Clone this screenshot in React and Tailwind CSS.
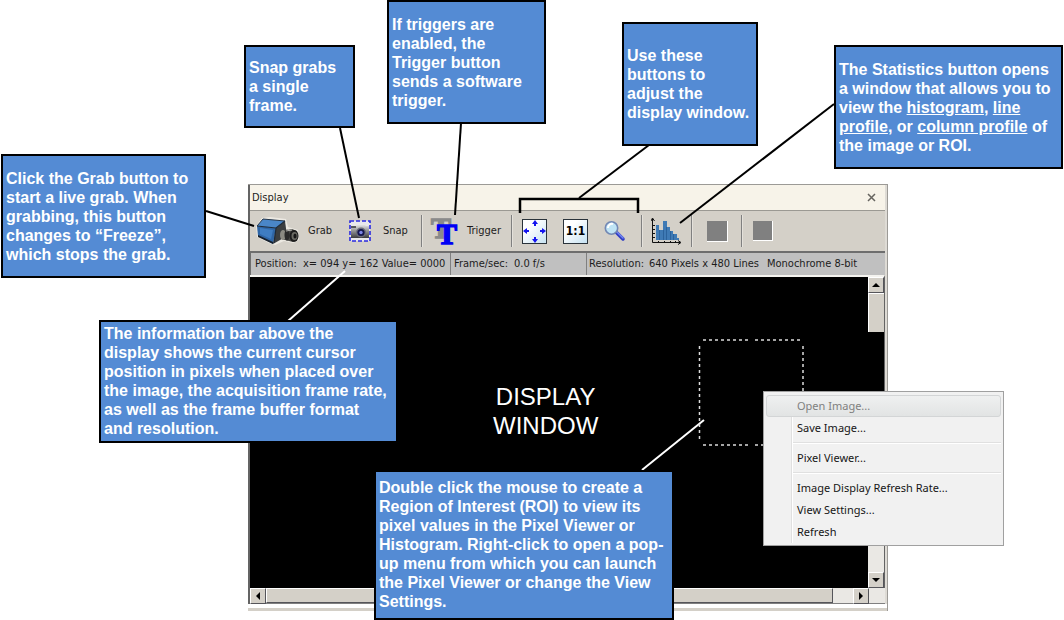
import React from "react";

const UI = "font-['DejaVu_Sans_Condensed','DejaVu_Sans',sans-serif] text-[11px] leading-[14px] text-[#1c1c1c]";

function Callout({ className, children }) {
  return (
    <aside
      className={`absolute flex items-center border-2 border-black bg-[#548bd4] pl-[3px] font-['Liberation_Sans',Arial,sans-serif] text-base leading-[19px] font-bold text-white ${className}`}
    >
      <p>{children}</p>
    </aside>
  );
}

function Lines({ rows }) {
  return rows.map((row, i) => (
    <span key={i} className="block whitespace-nowrap">
      {row}
    </span>
  ));
}

function Divider() {
  return <div className="h-8 w-[2px] shrink-0 border-l border-[#808080] bg-[#e4e1db]" />;
}

function CameraIcon() {
  return (
    <svg width="44" height="30" viewBox="0 0 44 30" className="shrink-0" aria-hidden="true">
      <path d="M0 10 L6 2 L14 1 L30 3 L32 11 L42 14 L43 24 L37 27 L28 25 L19 29 L13 27 L1 21Z" fill="#ece9e2" />
      <path d="M1 10 L7 3 L29 5 L20 12Z" fill="#4a86c8" />
      <path d="M1 10 L20 12 L17 28 L2 20Z" fill="#2f66a6" />
      <path d="M4 12 L17 14 L15 23 L4 18Z" fill="#3f7dc2" />
      <path d="M20 12 L29 5 L31 20 L17 28Z" fill="#3b3e40" />
      <path d="M1 10 L20 12 L29 5 M20 12 L18 27" fill="none" stroke="#1d2a3a" strokeWidth="1.2" />
      <path d="M1 10 L7 3 L29 5" fill="none" stroke="#26374b" strokeWidth="1" />
      <path d="M2 19 L17 26 L17 28 L2 21Z" fill="#17202c" />
      <path d="M26 15 L36 13 L41 15 L42 22 L37 26 L25 23Z" fill="#4a4a47" />
      <ellipse cx="27" cy="19" rx="3" ry="5" fill="#8b8a82" />
      <ellipse cx="31" cy="19" rx="2.500" ry="5.500" fill="#2a2a2a" />
      <ellipse cx="38" cy="20" rx="4.500" ry="6" fill="#1d1d1d" />
      <ellipse cx="38.500" cy="20" rx="3" ry="4" fill="#6b6b64" />
      <ellipse cx="39" cy="20" rx="1.600" ry="2.500" fill="#161616" />
      <path d="M30 15 L36 14" stroke="#b5b5b0" strokeWidth="1" />
    </svg>
  );
}

function SnapIcon() {
  return (
    <svg width="22" height="22" viewBox="0 0 22 22" className="shrink-0" aria-hidden="true">
      <defs>
        <linearGradient id="body" x1="0" y1="0" x2="0" y2="1">
          <stop offset="0" stopColor="#f1f1f1" />
          <stop offset="0.400" stopColor="#a3a3a5" />
          <stop offset="1" stopColor="#3b3b3d" />
        </linearGradient>
      </defs>
      <rect x="1" y="1" width="20" height="20" fill="#e9e8ec" />
      <path d="M2 6 H7 L9 4 H15 L17 6 H20 V18 H2Z" fill="url(#body)" />
      <path d="M2 6 H7 V8 H2Z" fill="#56585c" />
      <circle cx="12" cy="12.500" r="5" fill="#6b6c78" />
      <circle cx="12" cy="12.500" r="3.600" fill="#15164d" />
      <circle cx="12" cy="12.500" r="1.700" fill="#7d86e8" />
      <rect x="1" y="1" width="20" height="20" fill="none" stroke="#2a2ae0" strokeWidth="1.600" strokeDasharray="4 2" />
    </svg>
  );
}

function TriggerIcon() {
  return (
    <svg width="29" height="28" viewBox="0 0 29 28" className="shrink-0 overflow-visible font-['Liberation_Serif',serif] font-bold" aria-hidden="true">
      <text x="1" y="21" fontSize="30" fill="#8a8a8a" stroke="#8a8a8a" strokeWidth="1.500">T</text>
      <text x="7" y="27" fontSize="30" fill="#0000f5" stroke="#0000f5" strokeWidth="1.500">T</text>
    </svg>
  );
}

function FitIcon() {
  return (
    <svg width="25" height="25" viewBox="0 0 25 25" aria-hidden="true">
      <defs>
        <linearGradient id="tile" x1="0" y1="0" x2="1" y2="1">
          <stop offset="0.300" stopColor="#ffffff" />
          <stop offset="1" stopColor="#c5e2f2" />
        </linearGradient>
      </defs>
      <rect x="0.500" y="0.500" width="24" height="24" fill="url(#tile)" stroke="#2a333b" />
      <g fill="#1414ef">
        <path d="M13 1 L16 5 H14 V7 H12 V5 H10Z" />
        <path d="M13 24 L16 20 H14 V18 H12 V20 H10Z" />
        <path d="M1 12 L5 9 V11 H7 V13 H5 V15Z" />
        <path d="M24 12 L20 9 V11 H18 V13 H20 V15Z" />
      </g>
    </svg>
  );
}

function ZoomIcon() {
  return (
    <svg width="22" height="22" viewBox="0 0 22 22" aria-hidden="true">
      <path d="M12 12 L19 19" stroke="#2f3cc4" strokeWidth="3.500" strokeLinecap="round" />
      <path d="M13 12 L19 18" stroke="#7387f0" strokeWidth="1.500" strokeLinecap="round" />
      <circle cx="7.500" cy="8" r="6.200" fill="#bfe4f5" stroke="#7388b4" strokeWidth="1.600" />
      <path d="M4 8 A4 4 0 0 1 9 4" stroke="#fff" strokeWidth="2" fill="none" />
    </svg>
  );
}

function StatsIcon() {
  return (
    <svg width="32" height="28" viewBox="0 0 32 28" aria-hidden="true">
      <path d="M5 23 V8 H8 V13 H12 V4 H16 V10 H19 V14 H22 V17 H26 V21 H28 V23Z" fill="#3f7ab5" />
      <path d="M8.500 13 V23 M12.500 13 V23 M15.500 10 V23 M19.500 14 V23 M22.500 17 V23" stroke="#2b629c" strokeWidth="1" />
      <path d="M1.500 2 V25.500 H29" stroke="#111" strokeWidth="1" fill="none" />
      <path d="M0 4 L1.500 1 L3.500 4 M27 23.500 L30 25.500 L27 27.500" stroke="#111" strokeWidth="1" fill="none" />
      <path d="M2 8.500 H4 M2 12.500 H4 M2 16.500 H4 M2 20.500 H4 M7.500 24 V25 M13.500 24 V25 M19.500 24 V25 M24.500 24 V25" stroke="#111" />
    </svg>
  );
}

function ScrollButton({ label, points }) {
  return (
    <button
      aria-label={label}
      className="flex size-4 shrink-0 items-center justify-center border border-t-white border-r-[#55555a] border-b-[#55555a] border-l-white bg-[#d4d0c8]"
    >
      <svg width="8" height="8" viewBox="0 0 8 8" aria-hidden="true">
        <polygon points={points} fill="#000" />
      </svg>
    </button>
  );
}

function MenuItem({ children, disabled }) {
  return (
    <button
      role="menuitem"
      disabled={disabled}
      className={`block h-[22px] w-full rounded-[3px] border pl-[30px] text-left ${
        disabled
          ? "border-[#d3d5d6] bg-linear-to-b from-[#eff0f0] to-[#e2e4e4] text-[#808080]"
          : "border-transparent text-[#161616]"
      }`}
    >
      {children}
    </button>
  );
}

function ContextMenu() {
  return (
    <div
      role="menu"
      className="absolute top-[391px] left-[763px] w-[241px] border border-[#a0a0a0] bg-[#f1f1f1] p-[2px] pt-[3px] font-['Noto_Sans','Open_Sans',sans-serif] text-[11px] leading-5"
    >
      <div className="bg-[linear-gradient(to_right,transparent_25px,#e0e0e0_25px,#e0e0e0_26px,#fff_26px,#fff_27px,transparent_27px)]">
        <MenuItem disabled>Open Image...</MenuItem>
        <MenuItem>Save Image...</MenuItem>
        <hr className="my-[3px] ml-[27px] h-[2px] border-t border-[#e0e0e0] bg-white" />
        <MenuItem>Pixel Viewer...</MenuItem>
        <hr className="my-[3px] ml-[27px] h-[2px] border-t border-[#e0e0e0] bg-white" />
        <MenuItem>Image Display Refresh Rate...</MenuItem>
        <MenuItem>View Settings...</MenuItem>
        <MenuItem>Refresh</MenuItem>
      </div>
    </div>
  );
}

function Toolbar() {
  return (
    <div role="toolbar" aria-label="Display tools" className="flex h-10 items-center bg-[#d4d0c8] pl-[6px]">
      <button className="flex w-[93px] shrink-0 items-center gap-2">
        <CameraIcon />
        Grab
      </button>
      <button className="flex w-[72px] shrink-0 items-center gap-3">
        <SnapIcon />
        Snap
      </button>
      <Divider />
      <button className="ml-[7px] flex w-[81px] shrink-0 items-center gap-2">
        <TriggerIcon />
        Trigger
      </button>
      <Divider />
      <div className="flex w-[128px] shrink-0 items-center gap-4 pl-[9px]">
        <button aria-label="Fit to window">
          <FitIcon />
        </button>
        <button className="flex h-[25px] w-[25px] items-center justify-center border border-[#2a333b] bg-linear-to-br from-white from-30% to-[#c5e2f2] font-['DejaVu_Sans_Condensed',sans-serif] text-[12px] font-bold text-black">
          1:1
        </button>
        <button aria-label="Zoom">
          <ZoomIcon />
        </button>
      </div>
      <Divider />
      <button aria-label="Statistics" className="flex w-12 shrink-0 justify-center">
        <StatsIcon />
      </button>
      <Divider />
      <div className="flex w-12 shrink-0 justify-center">
        <button disabled aria-label="Record" className="size-[21px] border-r border-b border-white bg-[#808080]" />
      </div>
      <Divider />
      <div className="flex w-10 shrink-0 justify-center">
        <button disabled aria-label="Stop" className="size-5 border-r border-b border-white bg-[#808080]" />
      </div>
    </div>
  );
}

function StatusBar() {
  return (
    <div className="flex h-6 items-center border-t-2 border-l border-[#6e6e6e] bg-[#c0c0c0] whitespace-nowrap">
      <div className="flex h-full w-[200px] shrink-0 items-center border-r border-[#808080] pl-1">
        <span className="w-12">Position:</span>
        <span>x= 094 y= 162 Value= 0000</span>
      </div>
      <div className="flex h-full w-[136px] shrink-0 items-center border-r border-[#808080] pl-[3px]">
        <span className="w-[60px]">Frame/sec:</span>
        <span>0.0 f/s</span>
      </div>
      <div className="flex items-center pl-[2px]">
        <span className="w-[60px]">Resolution:</span>
        <span className="w-[118px]">640 Pixels x 480 Lines</span>
        <span>Monochrome 8-bit</span>
      </div>
    </div>
  );
}

export default function App() {
  return (
    <main className="relative min-h-screen overflow-hidden bg-white pt-[184px] pr-[176px] pb-2 pl-[248px]">
      <section aria-label="Display" className={`border-t border-r border-[#9c9a96] ${UI}`}>
        <div className="border-r-2 border-l-2 border-r-[#dedbd5] border-l-[#646464]">
          <header className="flex h-[26px] items-center justify-between border-b border-[#9b9993] bg-[#f7f3e9] pr-[9px] pl-[2px]">
            <h1>Display</h1>
            <button aria-label="Close">
              <svg width="9" height="9" viewBox="0 0 9 9" aria-hidden="true">
                <path d="M1 1 L8 8 M8 1 L1 8" stroke="#66645f" strokeWidth="1.500" />
              </svg>
            </button>
          </header>
          <Toolbar />
          <StatusBar />
          <div className="flex h-[313px] border-t-2 border-r border-t-[#f4f3ef] border-r-[#646464] bg-black">
            <div className="min-w-0 flex-1 pt-[105px] pl-[243px]">
              <p className="w-fit text-center font-['Liberation_Sans',Arial,sans-serif] text-[24px] leading-[29px] text-white">
                DISPLAY
                <br />
                WINDOW
              </p>
            </div>
            <div className="flex w-4 flex-col">
              <ScrollButton label="Scroll up" points="4,2 8,6 0,6" />
              <div className="h-[39px] border-t border-l border-white bg-[#d4d0c8]" />
              <div className="h-[61px]" />
              <div className="flex-1 bg-[#eae8e4]" />
              <ScrollButton label="Scroll down" points="0,2 8,2 4,6" />
            </div>
          </div>
          <div className="flex h-4 border-b border-[#808080] bg-[#eae8e4] pr-4">
            <ScrollButton label="Scroll left" points="6,0 6,8 2,4" />
            <div className="mr-5 flex-1 border border-t-white border-r-[#55555a] border-b-[#55555a] border-l-white bg-[#d4d0c8]" />
            <ScrollButton label="Scroll right" points="2,0 6,4 2,8" />
          </div>
        </div>
        <div className="mt-1 h-[3px] bg-[#d4d0c8]" />
      </section>

      <svg width="1064" height="620" className="pointer-events-none absolute top-0 left-0" aria-hidden="true">
        <g stroke="#000" strokeWidth="2" fill="none">
          <path d="M206 211 L254 226" />
          <path d="M340 128 L359 218" />
          <path d="M461 123 L455 215" />
          <path d="M649 145 L579 198" />
          <path d="M834 104 L680 223" />
          <path d="M520 213 V199 H638 V213" strokeWidth="2.500" />
          <path d="M884 391.500 H957" strokeWidth="1" />
        </g>
        <g stroke="#fff" strokeWidth="2" fill="none">
          <path d="M345 271 L288 321" />
          <path d="M704 420 L642 470" />
        </g>
        <g stroke="#dcdcdc" strokeWidth="1.500" strokeDasharray="3 3" fill="none">
          <path d="M703 340 H748 M755 340 H800" />
          <path d="M703 445 H748 M755 445 H800" />
          <path d="M699.500 346 V391 M699.500 394 V440 M803 346 V391" />
        </g>
      </svg>

      <Callout className="top-[154px] left-[1px] h-[124px] w-[205px]">
        <Lines rows={["Click the Grab button to", "start a live grab. When", "grabbing, this button", "changes to “Freeze”,", "which stops the grab."]} />
      </Callout>
      <Callout className="top-[45px] left-[244px] h-[83px] w-[111px]">
        <Lines rows={["Snap grabs", "a single", "frame."]} />
      </Callout>
      <Callout className="top-0 left-[387px] h-[124px] w-[159px]">
        <Lines rows={["If triggers are", "enabled, the", "Trigger button", "sends a software", "trigger."]} />
      </Callout>
      <Callout className="top-[22px] left-[622px] h-[124px] w-[136px]">
        <Lines rows={["Use these", "buttons to", "adjust the", "display window."]} />
      </Callout>
      <Callout className="top-[45px] left-[834px] h-[124px] w-[229px]">
        <Lines
          rows={[
            "The Statistics button opens",
            "a window that allows you to",
            <>view the <a href="#histogram" className="underline">histogram</a>, <a href="#line" className="underline">line</a></>,
            <><a href="#line" className="underline">profile</a>, or <a href="#column" className="underline">column profile</a> of</>,
            "the image or ROI.",
          ]}
        />
      </Callout>
      <Callout className="top-[320px] left-[99px] h-[123px] w-[299px] pb-[2px]">
        <Lines
          rows={[
            "The information bar above the",
            "display shows the current cursor",
            "position in pixels when placed over",
            "the image, the acquisition frame rate,",
            "as well as the frame buffer format",
            "and resolution.",
          ]}
        />
      </Callout>
      <Callout className="top-[470px] left-[374px] h-[150px] w-[300px] pb-[2px]">
        <Lines
          rows={[
            "Double click the mouse to create a",
            "Region of Interest (ROI) to view its",
            "pixel values in the Pixel Viewer or",
            "Histogram. Right-click to open a pop-",
            "up menu from which you can launch",
            "the Pixel Viewer or change the View",
            "Settings.",
          ]}
        />
      </Callout>
      <ContextMenu />
    </main>
  );
}
